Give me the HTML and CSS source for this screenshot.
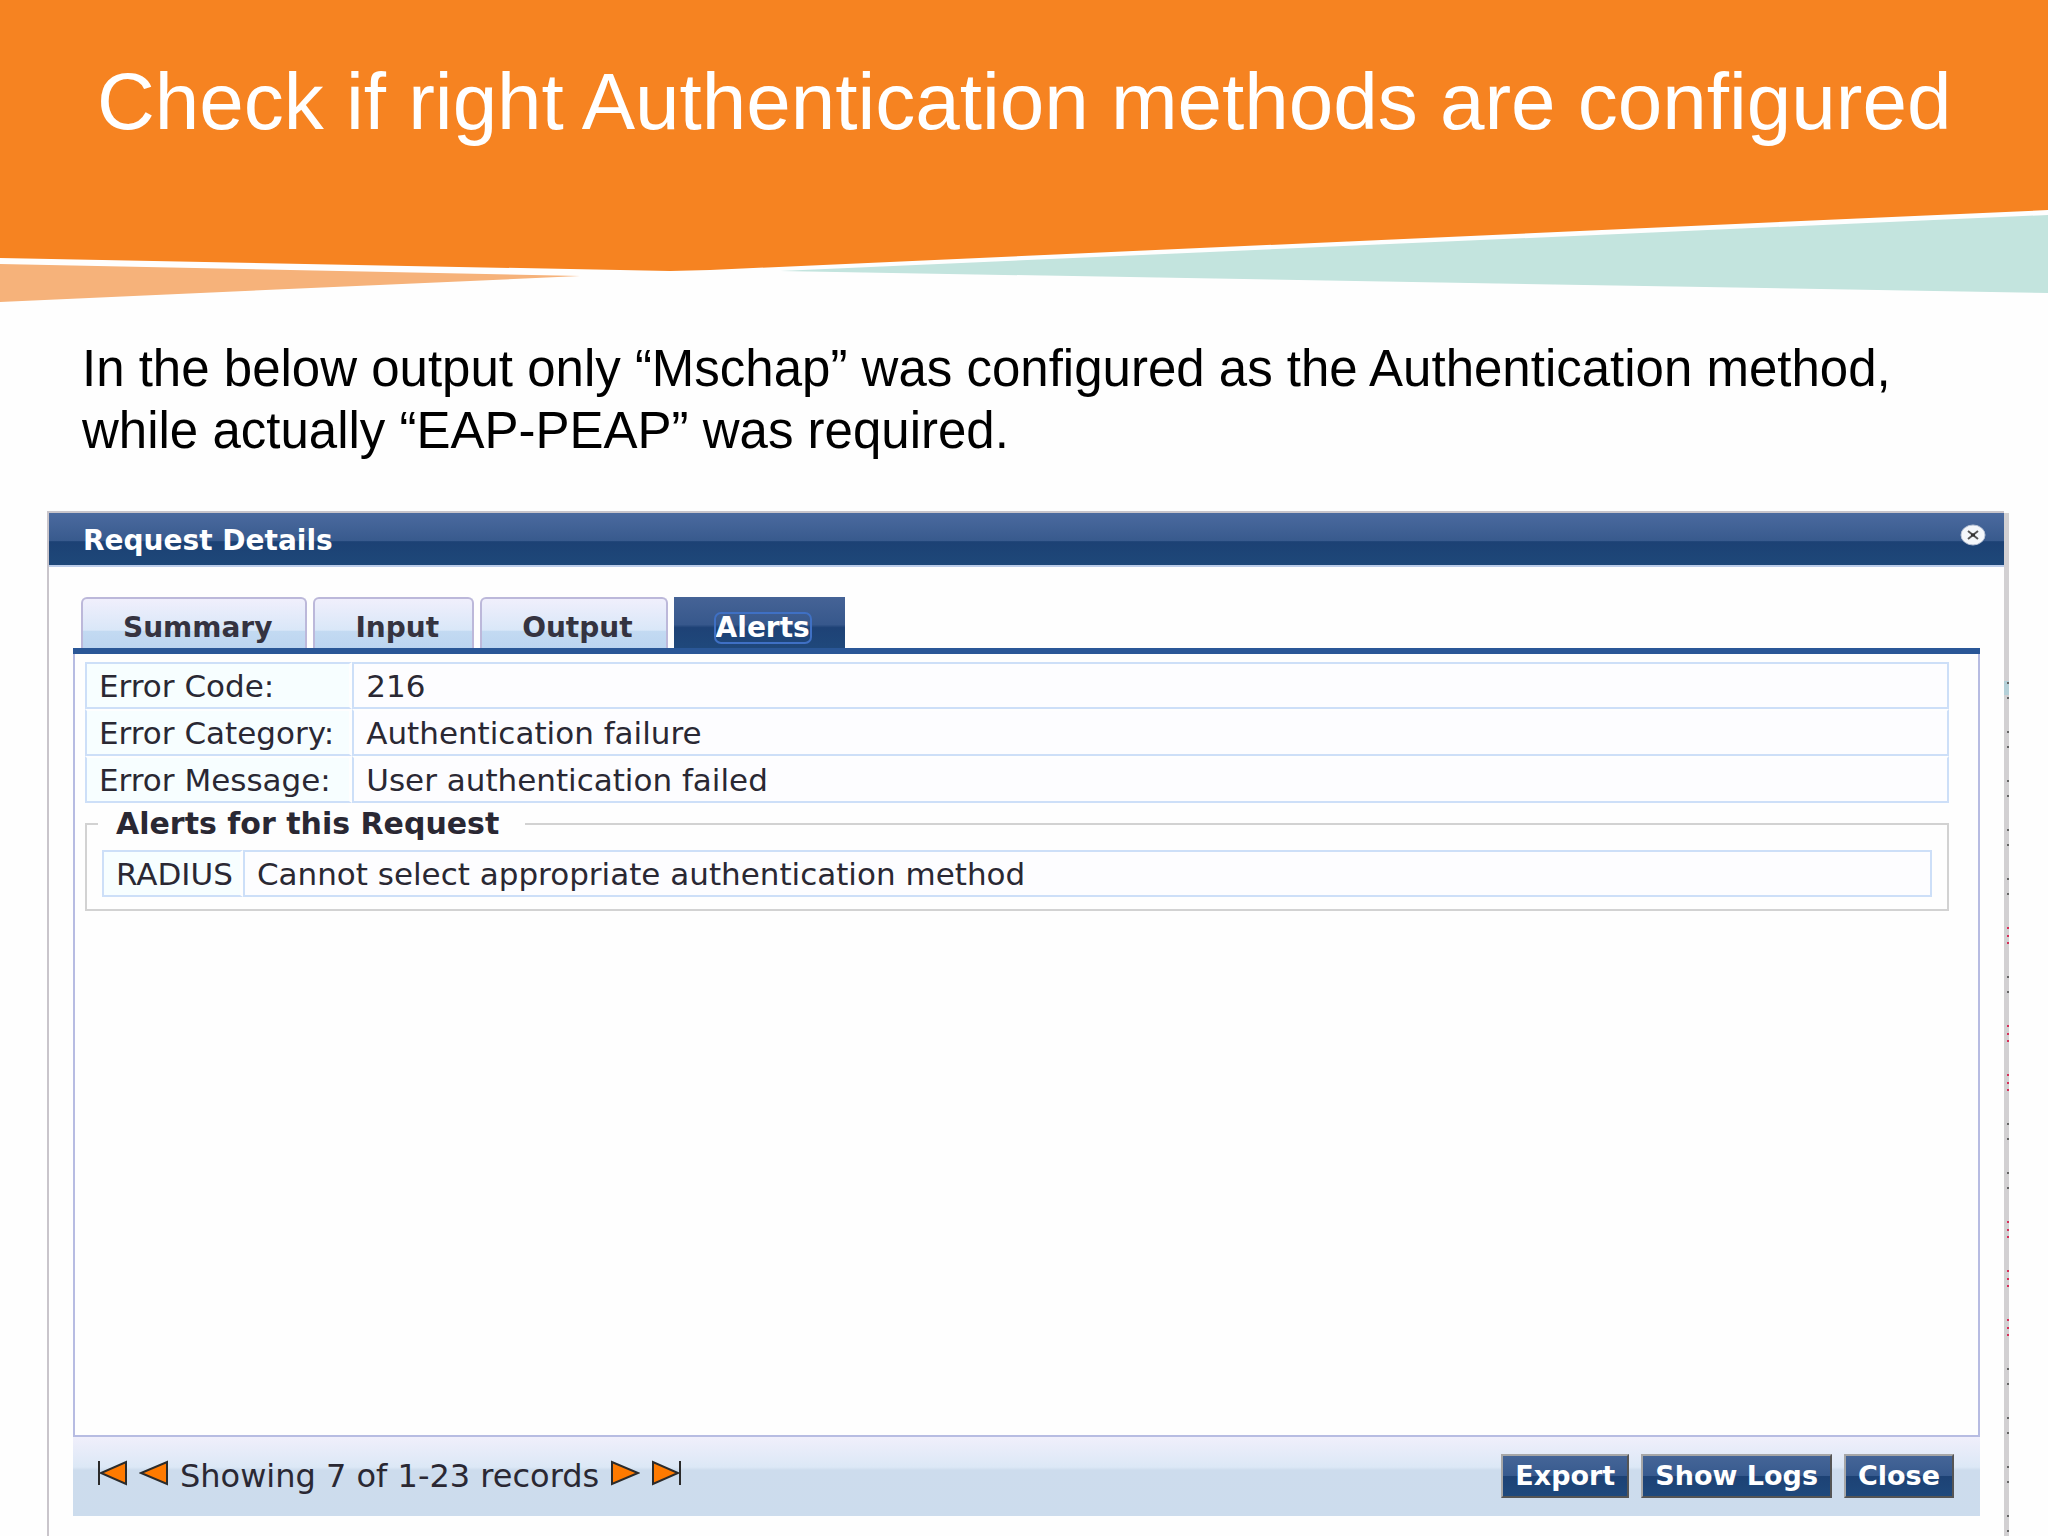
FILE: index.html
```html
<!DOCTYPE html>
<html lang="en">
<head>
  <meta charset="UTF-8">
  <meta name="viewport" content="width=device-width, initial-scale=1.0">
  <title>Check if right Authentication methods are configured</title>
  <link rel="stylesheet" href="styles.css">
</head>
<body>

<!-- Slide heading -->
<header class="banner">
  <svg class="banner-shape" viewBox="0 0 2048 304" preserveAspectRatio="none" aria-hidden="true">
    <polygon points="0,264 580,276 0,302" fill="#f6b27a"/>
    <polygon points="780,271 2048,215 2048,293" fill="#c3e4de"/>
    <polygon points="0,0 2048,0 2048,210 710,270 670,271 0,258" fill="#f68321"/>
  </svg>
  <h1>Check if right Authentication methods are configured</h1>
</header>

<p class="intro">In the below output only “Mschap” was configured as the Authentication method,<br>while actually “EAP-PEAP” was required.</p>

<!-- Request Details dialog -->
<section class="dialog" aria-labelledby="dialogTitle">
  <div class="dialog-header">
    <h2 id="dialogTitle">Request Details</h2>
    <button class="dialog-close" type="button" aria-label="Close dialog">
      <svg viewBox="0 0 26 22" width="26" height="22">
        <ellipse cx="13" cy="11" rx="12" ry="10" fill="#f4f7fb" stroke="#b9c3d6"/>
        <path d="M8 7l10 8M18 7L8 15" fill="none" stroke="#555" stroke-width="2"/>
        <path d="M11 11h4" fill="none" stroke="#333" stroke-width="3"/>
      </svg>
    </button>
  </div>

  <div class="dialog-body">
    <div class="tabs" role="tablist">
      <button class="tab" type="button" role="tab">Summary</button>
      <button class="tab" type="button" role="tab">Input</button>
      <button class="tab" type="button" role="tab">Output</button>
      <button class="tab active" type="button" role="tab" aria-selected="true"><span>Alerts</span></button>
    </div>

    <div class="panel" role="tabpanel">
      <table class="details summary">
        <tr><th scope="row">Error Code:</th><td>216</td></tr>
        <tr><th scope="row">Error Category:</th><td>Authentication failure</td></tr>
        <tr><th scope="row">Error Message:</th><td>User authentication failed</td></tr>
      </table>
      <fieldset class="alerts">
        <legend>Alerts for this Request</legend>
        <table class="details">
          <tr><th scope="row">RADIUS</th><td>Cannot select appropriate authentication method</td></tr>
        </table>
      </fieldset>
    </div>

    <div class="toolbar">
      <div class="pager">
        <button type="button" aria-label="First record">
          <svg viewBox="0 0 30 26" width="30" height="26"><path d="M28 2v22L3 13z"/><path d="M1 1v24"/></svg>
        </button>
        <button type="button" aria-label="Previous record">
          <svg viewBox="0 0 30 26" width="30" height="26"><path d="M28 2v22L2 13z"/></svg>
        </button>
        <span>Showing 7 of 1-23 records</span>
        <button type="button" aria-label="Next record">
          <svg viewBox="0 0 30 26" width="30" height="26"><path d="M2 2v22L28 13z"/></svg>
        </button>
        <button type="button" aria-label="Last record">
          <svg viewBox="0 0 30 26" width="30" height="26"><path d="M2 2v22L27 13z"/><path d="M29 1v24"/></svg>
        </button>
      </div>
      <div class="actions">
        <button type="button">Export</button>
        <button type="button">Show Logs</button>
        <button type="button">Close</button>
      </div>
    </div>
  </div>

  <!-- Edge of the list behind the dialog -->
  <svg class="dialog-edge" width="5" aria-hidden="true">
    <defs>
      <pattern id="rowMarks" width="5" height="49" y="22" patternUnits="userSpaceOnUse">
        <path d="M3 0h2v2h-2zM3 15h2v2h-2z" fill="#666"/>
      </pattern>
      <pattern id="rowMarksRed" width="5" height="49" y="22" patternUnits="userSpaceOnUse">
        <path d="M3 0h2v2h-2zM3 8h2v2h-2zM3 15h2v2h-2z" fill="#d8305a"/>
      </pattern>
    </defs>
    <rect width="5" height="100%" fill="#d2d0d2"/>
    <rect y="168" width="5" height="14" fill="#b5d0d8"/>
    <rect y="160" width="5" height="250" fill="url(#rowMarks)"/>
    <rect y="410" width="5" height="30" fill="url(#rowMarksRed)"/>
    <rect y="460" width="5" height="30" fill="url(#rowMarks)"/>
    <rect y="510" width="5" height="80" fill="url(#rowMarksRed)"/>
    <rect y="600" width="5" height="100" fill="url(#rowMarks)"/>
    <rect y="705" width="5" height="130" fill="url(#rowMarksRed)"/>
    <rect y="850" width="5" height="180" fill="url(#rowMarks)"/>
  </svg>
</section>

</body>
</html>
```
FILE: styles.css
```css
* {
  box-sizing: border-box;
}

body {
  margin: 0;
  height: 100vh;
  display: flex;
  flex-direction: column;
  overflow: hidden;
  background-color: #fefefe;
  color: #000;
  font-family: "Liberation Sans", Arial, sans-serif;
}

button {
  margin: 0;
  cursor: pointer;
  font-family: inherit;
}

/* Banner */
.banner {
  position: relative;
  height: 304px;
  flex: none;
  padding: 56px 97px 0;
}

.banner-shape {
  position: absolute;
  inset: 0;
  width: 100%;
  height: 100%;
}

.banner h1 {
  position: relative;
  margin: 0;
  color: #fff;
  font-size: 80px;
  line-height: 92px;
  font-weight: normal;
  text-rendering: optimizeLegibility;
  white-space: nowrap;
}

.intro {
  flex: none;
  margin: 34px 0 49px;
  padding: 0 82px;
  font-size: 51px;
  line-height: 62px;
  white-space: nowrap;
}

/* Dialog */
.dialog {
  position: relative;
  flex: 1;
  display: flex;
  flex-direction: column;
  margin: 0 44px 0 47px;
  border: 2px solid #c9c5cb;
  border-right: none;
  border-bottom: none;
  background-color: #fefefe;
  color: #2a2833;
  font-family: "DejaVu Sans", Verdana, sans-serif;
}

.dialog-edge {
  position: absolute;
  top: 0;
  right: -5px;
  height: 100%;
}

.dialog-header {
  display: flex;
  align-items: center;
  justify-content: space-between;
  height: 54px;
  padding: 0 18px 0 34px;
  border-bottom: 2px solid #bccdea;
  background: linear-gradient(#4b6a9f, #385a8d 54%, #1c4174 55%, #1e4879);
}

.dialog-header h2 {
  margin: 0;
  padding-top: 4px;
  color: #fff;
  font-size: 28px;
  line-height: 32px;
}

.dialog-close {
  display: flex;
  padding: 0 0 8px;
  border: none;
  background: none;
}

.dialog-body {
  flex: 1;
  display: flex;
  flex-direction: column;
  padding: 30px 24px 20px;
}

/* Tabs */
.tabs {
  display: flex;
  gap: 6px;
  padding-left: 8px;
  border-bottom: 6px solid #2a5797;
}

.tab {
  height: 51px;
  padding: 8px 33px 0 40px;
  border: 2px solid #bcb8da;
  border-bottom: none;
  border-radius: 6px 6px 0 0;
  background: linear-gradient(#f0effc, #d9e7f8 64%, #c3daf2 65%, #bcd5f0);
  color: #353340;
  font-size: 28px;
  line-height: 32px;
  font-weight: bold;
}

.tab.active {
  border-color: transparent;
  border-radius: 0;
  background: linear-gradient(#456396, #37588c 54%, #1e4276 60%, #1f487b) border-box;
  color: #fff;
}

.tab.active span {
  display: block;
  border-radius: 5px;
  outline: 2px solid #3f70c4;
  line-height: 28px;
}

/* Panel */
.panel {
  flex: 1;
  padding: 8px 29px 0 10px;
  border: 2px solid #b7bce2;
  border-top: none;
}

.details {
  width: 100%;
  border-collapse: separate;
  border-spacing: 0;
  font-size: 31px;
  line-height: 36px;
}

.details th,
.details td {
  height: 47px;
  padding: 4px 12px 3px;
  border: 2px solid #cddff8;
  font-weight: normal;
  text-align: left;
  white-space: nowrap;
}

.details tr + tr th,
.details tr + tr td {
  border-top-color: #fefefe;
}

.details th {
  width: 1px;
  padding-right: 7px;
  border-right: 3px solid #fefefe;
  background-color: #f7feff;
  background-clip: padding-box;
}

.details.summary th {
  padding-right: 15px;
}

.details td {
  background-color: #fdfdff;
}

.alerts {
  margin: 4px 0 0;
  padding: 9px 15px 12px;
  border: 2px solid #d2d2d2;
}

.alerts legend {
  margin-left: -4px;
  padding: 0 26px 0 18px;
  font-size: 30px;
  line-height: 34px;
  font-weight: bold;
}

/* Footer toolbar */
.toolbar {
  display: flex;
  align-items: center;
  justify-content: space-between;
  height: 79px;
  padding: 0 26px 2px 25px;
  background: linear-gradient(#f0effb, #dce8f6 38%, #cddced 42%, #ccdced);
}

.pager {
  display: flex;
  align-items: center;
  gap: 11px;
  font-size: 32px;
  line-height: 36px;
}

.pager button {
  display: flex;
  padding: 0 0 6px;
  border: none;
  background: none;
}

.pager path {
  fill: #ff7a00;
  stroke: #2b2b2b;
  stroke-width: 2;
}

.actions {
  display: flex;
  gap: 12px;
}

.actions button {
  height: 44px;
  padding: 0 12px;
  border: 2px solid;
  border-color: #a7a7a7 #555 #555 #a7a7a7;
  background: linear-gradient(#456597, #375a8e 50%, #1d4275 51%, #1f497c);
  color: #fff;
  font-size: 27px;
  line-height: 36px;
  font-weight: bold;
}
```
